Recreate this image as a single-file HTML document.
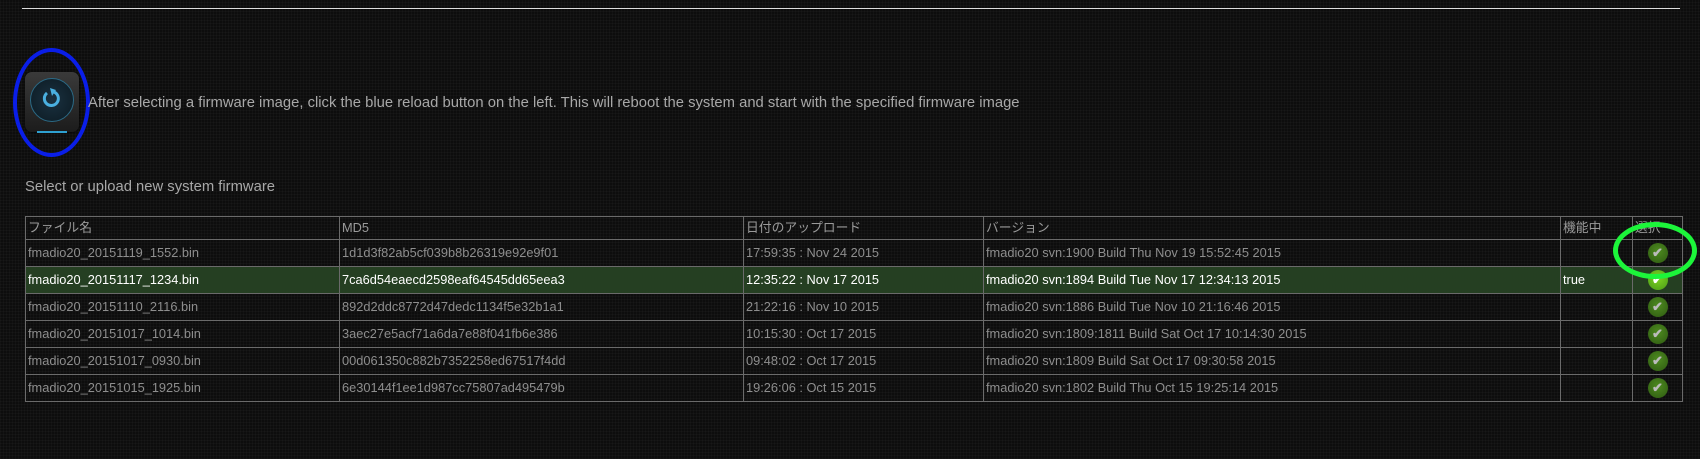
<!DOCTYPE html>
<html><head><meta charset="utf-8"><style>
body{margin:0;width:1700px;height:459px;overflow:hidden;background:#0d0d0d;background-image:repeating-linear-gradient(0deg,rgba(255,255,255,0.025) 0 1px,transparent 1px 3px),repeating-linear-gradient(90deg,rgba(255,255,255,0.025) 0 1px,transparent 1px 3px);font-family:"Liberation Sans","Noto Sans CJK JP",sans-serif;color:#9a9a9a;position:relative}
.hr{position:absolute;left:22px;top:8px;width:1658px;height:1px;background:#ddd}
.t1{position:absolute;left:88px;top:95px;font-size:14.8px;color:#a8a8a8}
.t2{position:absolute;left:25px;top:179px;font-size:14.8px;color:#a8a8a8}
table{position:absolute;left:25px;top:216px;border-collapse:collapse;font-size:12.8px}
td{border:1px solid #6a6a6a;height:26px;padding:0 2px;white-space:nowrap;color:#8e8e8e;line-height:14px}
tr.h td{height:22px;color:#9a9a9a;vertical-align:middle;padding-top:0}
tr.s td{background:#253f22;color:#fff}
.c{width:20px;height:20px;border-radius:50%;background:radial-gradient(circle at 50% 40%,#4d8a1f,#2e5a12);margin:0 auto;display:flex;align-items:center;justify-content:center;color:#bbb;font-size:13px;font-weight:bold}
tr.s .c{background:radial-gradient(circle at 50% 40%,#7ed321,#4a9a18);color:#fff}
</style></head><body>
<div class="hr"></div>
<div style="position:absolute;left:25px;top:72px;width:54px;height:60px;border-radius:7px;background:linear-gradient(#3a3a3a,#1c1c1c);box-shadow:0 0 2px #000"></div>
<div style="position:absolute;left:30px;top:78px;width:42px;height:42px;border-radius:50%;background:radial-gradient(circle,#1a3140,#0c1a22);border:1px solid #2b6a86"></div>
<svg style="position:absolute;left:39px;top:87px" width="24" height="24" viewBox="0 0 24 24"><path d="M8 6 A7 7 0 1 0 15 5" fill="none" stroke="#4ab0e0" stroke-width="3"/><path d="M11 1 L17 3 L13 9 Z" fill="#4ab0e0"/></svg>
<div style="position:absolute;left:37px;top:131px;width:30px;height:2px;background:#2ea0d0"></div>
<div style="position:absolute;left:13px;top:48px;width:69px;height:101px;border:4px solid #0a1ee8;border-radius:50%"></div>
<div class="t1">After selecting a firmware image, click the blue reload button on the left. This will reboot the system and start with the specified firmware image</div>
<div class="t2">Select or upload new system firmware</div>
<table>
<tr class="h"><td style="width:309px">ファイル名</td><td style="width:399px">MD5</td><td style="width:235px">日付のアップロード</td><td style="width:572px">バージョン</td><td style="width:67px">機能中</td><td style="width:45px">選択</td></tr>
<tr><td>fmadio20_20151119_1552.bin</td><td>1d1d3f82ab5cf039b8b26319e92e9f01</td><td>17:59:35 : Nov 24 2015</td><td>fmadio20 svn:1900 Build Thu Nov 19 15:52:45 2015</td><td></td><td><div class="c">✔</div></td></tr>
<tr class="s"><td>fmadio20_20151117_1234.bin</td><td>7ca6d54eaecd2598eaf64545dd65eea3</td><td>12:35:22 : Nov 17 2015</td><td>fmadio20 svn:1894 Build Tue Nov 17 12:34:13 2015</td><td>true</td><td><div class="c">✔</div></td></tr>
<tr><td>fmadio20_20151110_2116.bin</td><td>892d2ddc8772d47dedc1134f5e32b1a1</td><td>21:22:16 : Nov 10 2015</td><td>fmadio20 svn:1886 Build Tue Nov 10 21:16:46 2015</td><td></td><td><div class="c">✔</div></td></tr>
<tr><td>fmadio20_20151017_1014.bin</td><td>3aec27e5acf71a6da7e88f041fb6e386</td><td>10:15:30 : Oct 17 2015</td><td>fmadio20 svn:1809:1811 Build Sat Oct 17 10:14:30 2015</td><td></td><td><div class="c">✔</div></td></tr>
<tr><td>fmadio20_20151017_0930.bin</td><td>00d061350c882b7352258ed67517f4dd</td><td>09:48:02 : Oct 17 2015</td><td>fmadio20 svn:1809 Build Sat Oct 17 09:30:58 2015</td><td></td><td><div class="c">✔</div></td></tr>
<tr><td>fmadio20_20151015_1925.bin</td><td>6e30144f1ee1d987cc75807ad495479b</td><td>19:26:06 : Oct 15 2015</td><td>fmadio20 svn:1802 Build Thu Oct 15 19:25:14 2015</td><td></td><td><div class="c">✔</div></td></tr>
</table>
<div style="position:absolute;left:1613px;top:222px;width:74px;height:47px;border:5px solid #1cf53a;border-radius:50%"></div>
</body></html>
